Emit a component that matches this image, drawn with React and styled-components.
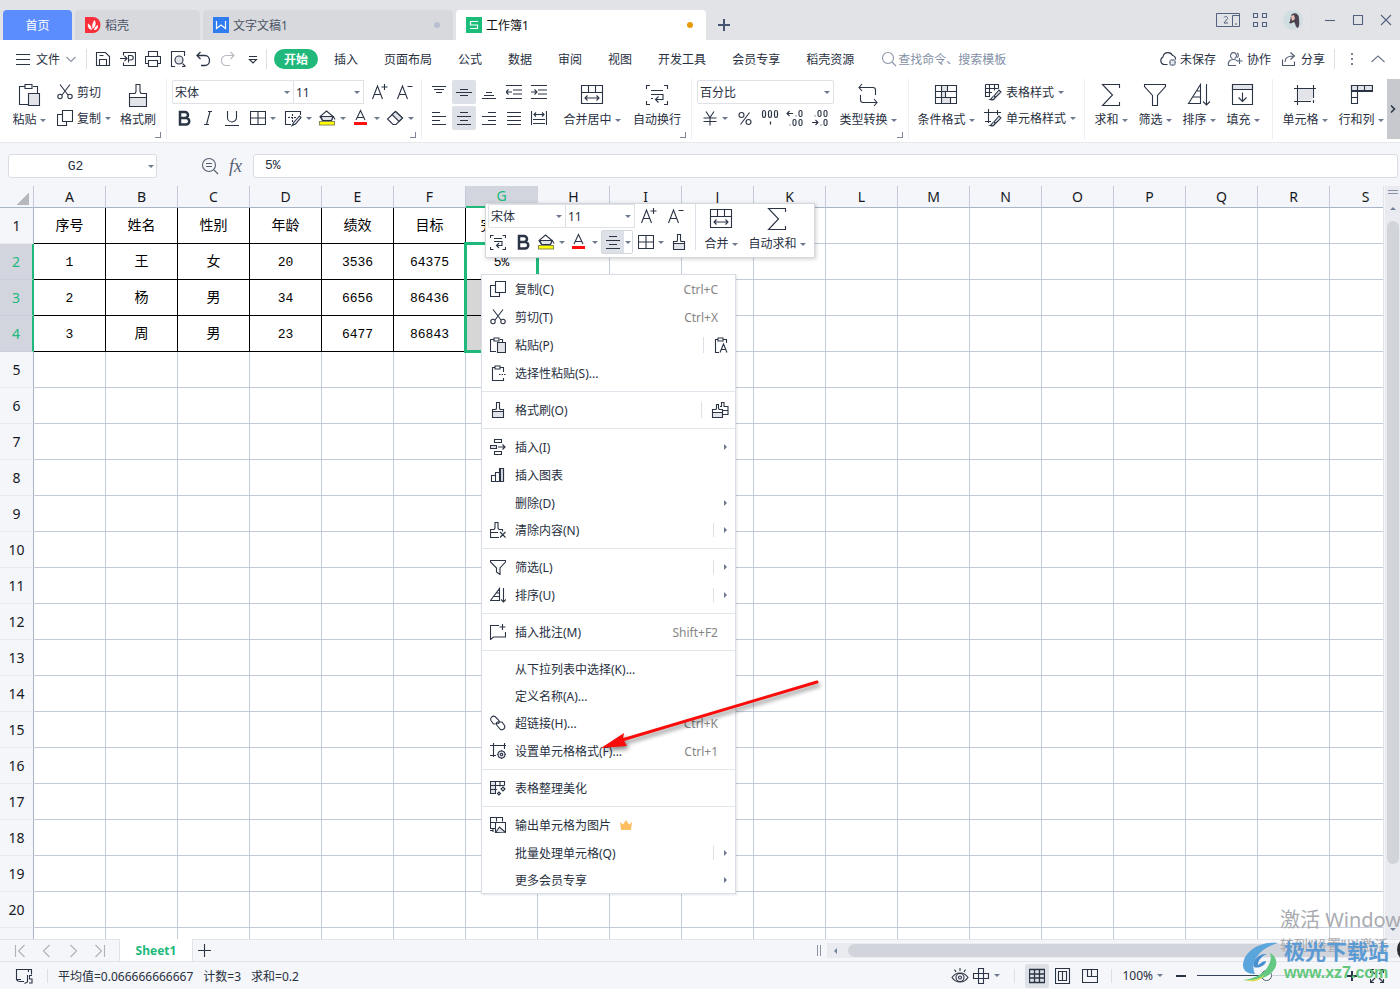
import React, { useState } from "react";
import styled, { createGlobalStyle } from "styled-components";

const GlobalStyle = createGlobalStyle`
  * { box-sizing: border-box; }
  html, body { margin: 0; height: 100%; overflow: hidden; }
  body, button, input, select {
    font-family: "Noto Sans", "Noto Sans CJK SC", sans-serif;
    font-size: 12px;
    color: #28303f;
  }
  button, input, select { border: 0; padding: 0; margin: 0; background: none; outline: none; }
  svg { display: block; flex: none; }
`;

const ink = "#2b3445";
const soft = "#e2e4e9";
const green = "#20b97b";

// [size, drawing]
const icons = {
  burger: [16, <path d="M1 3.500h14M1 8.500h14M1 13.500h14" />],
  down: [12, <path d="M1.500 4l4.500 4.500L10.500 4" stroke="#8a93a3" />],
  up: [16, <path d="M1.500 11L8 5l6.500 6" stroke="#6c7686" />],
  save: [16, <path d="M1.500 1.500h9l4 4v9h-13zM4.500 14.500v-6h7v6M4.500 4.500h4" />],
  output: [16, <path d="M3.500 4.500v-3h12v13h-12v-3M0 7.500h6.500M4.500 5l2.500 2.500-2.500 2.500M8.500 11.500v-7h2.500a2 2 0 0 1 0 4.500h-2.500" />],
  print: [16, <path d="M3.500 5V.5h9V5M3.500 12.500h-3V5.500h15v7h-3M3.500 9.500h9v6h-9z" />],
  preview: [16, <><path d="M5 15.500H1.500V.5h13V5M12.500 12.500l3 3M12 15.500h3" /><circle cx="9" cy="9" r="4" fill={soft} /></>],
  undo: [16, <path d="M5.500 1L2 4.500 5.500 8M2 4.500h8a4.500 5 0 0 1 0 10H6" strokeWidth="1.300" />],
  redo: [16, <path d="M10.500 1L14 4.500 10.500 8M14 4.500H6a4.500 5 0 0 0 0 10h4" stroke="#b5bac3" />],
  more: [12, <path d="M2 3.500h8M2.500 6.500L6 10l3.500-3.500z" />],
  search: [16, <><circle cx="7" cy="7" r="5.500" stroke="#8a94a8" /><path d="M11 11l4 4" stroke="#8a94a8" /></>],
  cloud: [18, <><path d="M8.500 14.500H5a4 4 0 0 1-1-7.500 5 5 0 0 1 9.500-1.500 3.500 3.500 0 0 1 3 4" /><circle cx="13.500" cy="12.500" r="3.500" fill="#8b94a5" stroke="none" /><path d="M12 11l3 3M15 11l-3 3" stroke="#fff" /></>],
  people: [16, <path d="M5.500 7.500a3 3 0 1 1 2 0M9 14.500H1.500c-1-4 1.500-6 5-6 2 0 3 .5 4 1.500M12.500 7v6M9.500 10h6M10 2a2.500 2.500 0 0 1 0 4.500" stroke="#56637a" />],
  share: [16, <path d="M1.500 8.500v6h12v-4M4 11c0-4 3-6 8-6M9.500 1.500L13.500 5l-4 3.500" stroke="#4c576b" />],
  dots: [16, <path d="M7 2h2v2H7zM7 7h2v2H7zM7 12h2v2H7z" fill="#7b8595" stroke="none" />],
  cut: [16, <><path d="M3 .5l8 10.500M13 .5L5 11" /><circle cx="3" cy="12.500" r="2.200" /><circle cx="13" cy="12.500" r="2.200" /></>],
  copy: [16, <path d="M5.500.5h10v11h-10zM5 4.500H.5v11h9V12" />],
  paste: [24, <><path d="M8 3.500H2.500v18H11M16 3.500h4.500V10" /><path d="M8 1.500h7v4H8z" /><path d="M11.500 10.500h11v12h-11z" fill={soft} /></>],
  pasteS: [16, <><path d="M4 2.500H.5v12H6M10 2.500h2.500V5M4 1h5v3H4z" /><path d="M7.500 5.500h8v10h-8z" fill={soft} /></>],
  special: [16, <path d="M5 2.500H2.500v13h11V13M10 2.500h3.500V7M5 1h5v3H5zM9 9.500h1.500M11.500 9.500h1.500M14 9.500h1.500" />],
  pasteA: [16, <path d="M5 2.500H2.500v13H6M10 2.500h3.500V6M5 1h5v3H5zM7 15.500L10.500 7l3.500 8.500M8.500 12.500h4" />],
  brush: [24, <><path d="M3.500 14.500h17v9h-17z" fill={soft} /><path d="M3.500 14.500v-4H9l1-2v-7h4v7l1 2h5.500v4" /></>],
  brushS: [16, <><path d="M2.500 9.500h11v6h-11z" fill={soft} /><path d="M2.500 9.500v-2H6l.5-1.500V.5h3V6l.5 1.500h3.500v2" /></>],
  brushes: [18, <><path d="M1.500 11.500h10v5h-10z" fill={soft} /><path d="M1.500 11.500v-3H5l.5-1.500V3.500h2V7l.5 1.500h3.500v3M9 5.500h1.500V1.500h2.500v4h4v8h-5M12 9.500h5" /></>],
  bigger: [18, <path d="M2.500 16L7.500 3l5 13M4.500 11.500h6M14.500 1v6M11.500 4h6" />],
  smaller: [18, <path d="M2.500 16L7.500 3l5 13M4.500 11.500h6M12.500 3.500h5" />],
  bold: [16, <path d="M4 2h5a3 3 0 0 1 0 6H4zM4 8h6a3 3 0 0 1 0 6.500H4z" strokeWidth="2.500" />],
  italic: [16, <path d="M8 1.500h4M10 1.500L6.500 14.500M4 14.500h5" />],
  underline: [16, <path d="M3.500 1v6.500a4.500 4.500 0 0 0 9 0V1M1 15.500h14" />],
  borders: [16, <path d="M.5 1.500h15v13H.5zM8 1.500v13M.5 8h15" />],
  pen: [18, <><path d="M7 15.500H1.500v-13h15V6" /><path d="M4 8.500h8M8.500 5v8" strokeDasharray="2 1" /><path d="M15.500 7l-5.500 6-2 3.500 3.500-1.500L17 8.500z" fill={soft} /></>],
  fill: [18, <><path d="M8.500 2L15 7.500l-1.500 4h-9L2 7.500z" fill="#fff" /><path d="M3 7.500h12l-1.500 4h-9z" fill={soft} /><path d="M15 7l2 3.500" /><path d="M1.500 12.500h15v3.500h-15z" fill="#ffff00" stroke="#8b8b55" /></>],
  color: [18, <><path d="M4 11L8.500 1.500 13 11M5.500 8.500h6" /><path d="M2 13h13v3H2z" fill="#ff1010" stroke="none" /></>],
  eraser: [18, <><path d="M9.500 2.500l7 6.500-6.500 6.500H7L1.500 10z" fill="#fff" /><path d="M9.500 2.500l7 6.500-3.500 3.500-7-7z" fill={soft} /></>],
  top: [16, <path d="M1 2.500h14M3 5.500h10M5 8.500h6" />],
  middle: [16, <path d="M4 5.500h8M0 8.500h16M4 11.500h8" />],
  bottom: [16, <path d="M5 8.500h6M3 11.500h10M1 14.500h14" />],
  outdent: [16, <path d="M0 1.500h16M7 6h9M7 10h9M0 14.500h16M0 8h6M2.500 5.500L0 8l2.500 2.500" />],
  indent: [16, <path d="M0 1.500h16M7 6h9M7 10h9M0 14.500h16M0 8h6M3.500 5.500L6 8l-2.500 2.500" />],
  left: [16, <path d="M1 2.500h8M1 6.500h14M1 10.500h8M1 14.500h14" />],
  center: [16, <path d="M4 2.500h8M1 6.500h14M4 10.500h8M1 14.500h14" />],
  right: [16, <path d="M7 2.500h8M1 6.500h14M7 10.500h8M1 14.500h14" />],
  justify: [16, <path d="M1 2.500h14M1 6.500h14M1 10.500h14M1 14.500h14" />],
  spread: [16, <path d="M.5 1v14M15.500 1v14M3 4.500h10M5 2.500l-2 2 2 2M11 2.500l2 2-2 2M2 9.500h12M2 13.500h12" />],
  merge: [24, <><path d="M1.500 2.500h21v18h-21zM1.500 9.500h21M8.500 2.500v7M15.500 2.500v7" /><path d="M5 15h14M7.500 12.500L5 15l2.500 2.500M16.500 12.500L19 15l-2.500 2.500" /></>],
  wrap: [24, <path d="M5 2.500H1.500V6M19 2.500h3.500V6M5 21.500H1.500V18M19 21.500h3.500V18M6 7.500h12M6 11.500h12v5h-7M6 15.500h2M13.500 13.500l-3 3 3 3" />],
  wrapS: [16, <path d="M3.500 1.500h-3V4M12.500 1.500h3V4M3.500 15.500h-3V13M12.500 15.500h3V13M4 4.500h8M4 7.500h8v4H7M9 9l-2.500 2.500L9 14" />],
  yen: [16, <path d="M4 1.500L8 7.500l4-6M1.500 8h13M1.500 11.500h13M8 7.500v8" />],
  percent: [16, <><circle cx="4.500" cy="5" r="2.500" /><circle cx="11.500" cy="12" r="2.500" /><path d="M12.500 2.500l-9 12" /></>],
  comma: [18, <path d="M1.500 3.500a1.500 2 0 0 1 3 0v3a1.500 2 0 0 1-3 0zM7.500 3.500a1.500 2 0 0 1 3 0v3a1.500 2 0 0 1-3 0zM13.500 3.500a1.500 2 0 0 1 3 0v3a1.500 2 0 0 1-3 0zM9.500 12.500v3" strokeWidth="1.200" />],
  decUp: [18, <path d="M1 4.500h6M3.500 2L1 4.500 3.500 7M9.500 7h1M13 3a1.500 1.500 0 0 1 3 0v3a1.500 1.500 0 0 1-3 0zM3.500 16h1M7 12a1.500 1.500 0 0 1 3 0v3a1.500 1.500 0 0 1-3 0zM13 12a1.500 1.500 0 0 1 3 0v3a1.500 1.500 0 0 1-3 0z" />],
  decDown: [18, <path d="M3.500 7h1M7 3a1.500 1.500 0 0 1 3 0v3a1.500 1.500 0 0 1-3 0zM13 3a1.500 1.500 0 0 1 3 0v3a1.500 1.500 0 0 1-3 0zM1 13.500h6M4.500 11L7 13.500 4.500 16M9.500 16h1M13 12a1.500 1.500 0 0 1 3 0v3a1.500 1.500 0 0 1-3 0z" />],
  convert: [24, <path d="M6 1L3 4.500 6 8M3 4.500h14a2.500 2.500 0 0 1 2.500 2.500v5M18 23l3-3.500-3-3.500M21 19.500H7A2.500 2.500 0 0 1 4.500 17v-5" />],
  cond: [24, <><path d="M7 3h7v6H7zM7 9h4v6H7zM7 15h10v6H7z" fill={soft} stroke="none" /><path d="M1.500 2.500h21v18h-21zM1.500 8.500h21M1.500 14.500h21M7.500 2.500v6M13.500 2.500v6M7.500 8.500v12M11.500 8.500v6M16.500 14.500v6" /></>],
  tstyle: [18, <><path d="M1.500 1.500h13v4M1.500 1.500v12H6M1.500 5.500h13M1.500 9.500H8M5.500 1.500v12M10.500 1.500v6" /><path d="M15 7l-5 6 1.500 1.500L17 9zM9.500 13.500c-2 0-1 2.500-3.500 3 2.500 1 4.500 0 5-2" fill={soft} /></>],
  cstyle: [18, <><path d="M4.500 0v14M0 3.500h17M13.500 1v5M1 12.500h6" /><path d="M15 7l-5 6 1.500 1.500L17 9zM9.500 13.500c-2 0-1 2.500-3.500 3 2.500 1 4.500 0 5-2" fill={soft} /></>],
  sum: [24, <path d="M20.500 5V1.500h-17L13.500 12l-10 10.500h17V19" />],
  filter: [24, <path d="M1.500 1.500h21v2l-8 9v10h-5v-10l-8-9z" />],
  filterS: [16, <path d="M.5 1.500h15v1.500L10 9v6.500L6.500 13V9L.5 3z" />],
  sort: [24, <path d="M1.500 20.500L13.500 1.500v19zM6 14h7M9.500 8h4M19.500 1v21M16 18.500l3.500 3.500 3.500-3.500" />],
  sortS: [16, <path d="M.5 13.500L9.500 1.500v12zM3.500 9.500h6M6 6h3.500M13.500 1v14M11 12.500l2.500 2.500 2.500-2.500" />],
  fillDown: [24, <><path d="M1.500 1.500h20v5h-20z" fill={soft} /><path d="M1.500 1.500h20v20h-20zM11.500 9.500v9M7.500 14.500l4 4 4-4" /></>],
  cell: [24, <><path d="M5.500 5.500h14v12h-14z" fill={soft} stroke="none" /><path d="M1 5.500h22M4.500 2v20M1 18.500h17M20.500 2v13M20.500 17v3" /></>],
  rowcol: [24, <><path d="M2.500 2.500h21v5h-21z" fill={soft} /><path d="M2.500 2.500h21v6h-15v12h-6zM8.500 2.500v6M15.500 2.500v6M2.500 8.500h6M2.500 14.500h6" /></>],
  zoomOut: [18, <><circle cx="8" cy="8" r="6.500" stroke="#566072" /><path d="M5 6.500h6M5 9.500h6M13 13l4 4" stroke="#566072" /></>],
  insert: [16, <><path d="M4.500.5h7v3h-7zM4.500 12.500h7v3h-7z" /><path d="M.5 6.500h6v3h-6z" fill={soft} /><path d="M8 8h7M12.500 5.500L15 8l-2.500 2.500" /></>],
  chart: [16, <><path d="M10.500 1.500h3v13h-3z" fill={soft} /><path d="M1.500 8.500h4v6h-4zM5.500 5.500h4v9h-4zM9.500 1.500h4v13h-4z" /></>],
  clear: [16, <path d="M9 15.500H.5v-8H4L5 6V.5h3V6l1 1.500h3.500v2M.5 10.500H8M10 10l5.500 5.500M15.500 10L10 15.500" />],
  note: [16, <path d="M9 1.500H.5v14l3-2.500h12V8M12.500 0v6M9.500 3h6" />],
  link: [16, <path d="M8.500 8.500L3.500 9 1 5.500a3 3 0 0 1 4-4l4 4a3 3 0 0 1-.5 3M7 7l5 0 2.500 3.500a3 3 0 0 1-4 4l-3.500-4a3 3 0 0 1 0-3.500" />],
  format: [16, <><path d="M3.500 0v14M0 2.500h16M14.500 0v6M0 12.500h6" /><circle cx="11.500" cy="11.500" r="3.500" fill={soft} /><circle cx="11.500" cy="11.500" r="1.200" /><path d="M11.500 7v1M11.500 15v1M7 11.500h1M15 11.500h1" /></>],
  beauty: [16, <><path d="M1 1.500h5v12H1z" fill={soft} stroke="none" /><path d="M6 13.500H.5v-12h14v4M.5 5.500h14M.5 9.500H7M5.500 1.500v12M10 1.500v5" /><path d="M13 7l2 2-2 2-2-2zM9 12l1.500 1.500L9 15l-1.500-1.500z" /></>],
  picture: [16, <><path d="M5 11.500H.5V.5h12v4M.5 5.500H5M6.500.5v4" /><path d="M5.500 5.500h10v10h-10z" fill="#fff" /><path d="M6 15l3.500-5 6 5.500" fill={soft} /><path d="M0 13.500h3M3 12v3" /></>],
  crown: [14, <path d="M1 4l3 2.500L7 2l3 4.500L13 4l-1 8H2z" fill="#ffbf60" stroke="none" />],
  first: [14, <path d="M1.500 1v12M10.500 1L4.500 7l6 6" stroke="#adb2bc" />],
  prev: [14, <path d="M9.500 1L3.500 7l6 6" stroke="#adb2bc" />],
  next: [14, <path d="M4.500 1l6 6-6 6" stroke="#adb2bc" />],
  last: [14, <path d="M3.500 1l6 6-6 6M12.500 1v12" stroke="#adb2bc" />],
  plus: [14, <path d="M6.500 0v13M0 6.500h13" />],
  plusTab: [14, <path d="M7 1v12M1 7h12" stroke="#46546f" strokeWidth="2" />],
  macro: [18, <path d="M6 12.500H1.500v-10h15v5M1.500 12.500l2 2M4 14.500h5M13.500 3v2M12.500 8v7l-3 1.500M17 8.500h-2.500v3.500H17v4h-3" />],
  eye: [18, <><path d="M1 10.500c4-6 12-6 16 0-4 6-12 6-16 0zM9 1v3M3.500 2.500L5 5M14.500 2.500L13 5" /><circle cx="9" cy="10.500" r="4" /><circle cx="9" cy="10.500" r="1.500" /></>],
  cross: [18, <path d="M6.500 1.500h5v15h-5zM1.500 6.500h15v5h-15z" />],
  normal: [16, <path d="M.5 1.500h15v13H.5zM.5 6h15M.5 10h15M5.500 1.500v13M10.500 1.500v13" strokeWidth="1.300" />],
  page: [16, <path d="M.5.5h14v15H.5zM3.500 3.500h8v9h-8zM7.500 3.500v9" />],
  brk: [16, <path d="M.5 1.500h15v13H.5zM5.500 1.500v7h10M9.500 1.500v7" />],
  full: [16, <path d="M5 1.500H1.500V5M11 1.500h3.500V5M5 14.500H1.500V11M11 14.500h3.500V11M2 2l4 4M14 2l-4 4M2 14l4-4M14 14l-4-4" />],
  grid4: [16, <path d="M1.500 1.500h4v4h-4zM10.500 1.500h4v4h-4zM1.500 10.500h4v4h-4zM10.500 10.500h4v4h-4z" stroke="#53627f" />],
  min: [14, <path d="M2 7.500h10" stroke="#53627f" />],
  max: [14, <path d="M2.500 2.500h9v9h-9z" stroke="#53627f" />],
  close: [14, <path d="M2 2l10 10M12 2L2 12" stroke="#53627f" />],
  chevR: [12, <path d="M4 2.500L7.500 6 4 9.500" strokeWidth="1.500" />],
};

const Icon = ({ name }) => {
  const [size, body] = icons[name];
  return (
    <svg width={size} height={size} viewBox={`0 0 ${size} ${size}`} fill="none" stroke={ink} strokeWidth="1.1" aria-hidden="true">
      {body}
    </svg>
  );
};

const Caret = styled.i`
  flex: none;
  width: 0;
  border: 3px solid transparent;
  border-bottom: 0;
  border-top-color: #6d7a90;
`;

const Page = styled.div`
  position: relative;
  display: flex;
  flex-direction: column;
  height: 100vh;
  overflow: hidden;
  background: #f5f6f9;
`;

const Spacer = styled.div`
  flex: 1;
`;

const Gap = styled.span`
  flex: none;
  width: ${(p) => p.$w}px;
`;

const Rule = styled.span`
  flex: none;
  width: 1px;
  height: ${(p) => p.$h || 20}px;
  margin: 0 ${(p) => p.$r || 0}px 0 ${(p) => p.$l || 0}px;
  background: ${(p) => (p.$dark ? "#8b94a5" : "#dcdfe5")};
`;

/* title bar */
const TabBar = styled.header`
  display: flex;
  align-items: flex-end;
  flex: none;
  gap: 3px;
  height: 40px;
  padding-left: 3px;
  background: #e2e3e7;
`;

const Tab = styled.button`
  display: flex;
  align-items: center;
  gap: 4px;
  flex: none;
  width: ${(p) => p.$w}px;
  height: 30px;
  padding: 0 10px;
  border-radius: 4px 4px 0 0;
  justify-content: ${(p) => (p.$home ? "center" : "flex-start")};
  background: ${(p) => (p.$home ? "#5c8dff" : p.$active ? "#fff" : "#d8d9dd")};
  color: ${(p) => (p.$home ? "#fff" : p.$active ? "#111" : "#4a5366")};
`;

const Dot = styled.span`
  width: 6px;
  height: 6px;
  margin-right: 3px;
  border-radius: 50%;
  background: ${(p) => p.$color};
`;

const PlainButton = styled.button`
  display: flex;
  align-items: center;
  justify-content: center;
  gap: ${(p) => p.$gap || 4}px;
  flex: none;
  width: ${(p) => (p.$w ? p.$w + "px" : "auto")};
  height: ${(p) => p.$h || 24}px;
`;

const WindowTools = styled.div`
  display: flex;
  align-items: center;
  height: 40px;
`;

/* menu bar */
const MenuBar = styled.nav`
  display: flex;
  align-items: center;
  flex: none;
  height: 38px;
  padding: 0 14px 0 15px;
  background: #fff;
`;

const QuickTools = styled.div`
  display: flex;
  gap: 1px;
  padding: 0 0 0 4px;
`;

const MenuLinks = styled.div`
  display: flex;
  align-items: center;
  gap: 26px;
  margin-left: 16px;
`;

const MenuTab = styled.button`
  height: 20px;
  padding-top: 1px;
  line-height: 19px;
  white-space: nowrap;
`;

const StartTab = styled(MenuTab)`
  width: 44px;
  margin-left: 7px;
  border-radius: 10px;
  background: ${green};
  color: #fff;
  font-weight: 700;
`;

const Search = styled.label`
  display: flex;
  align-items: center;
  gap: 1px;
  margin-left: 27px;
  input { width: 130px; height: 20px; }
  input::placeholder { color: #8490a6; opacity: 1; }
`;

/* ribbon */
const Ribbon = styled.section`
  display: flex;
  flex: none;
  height: 65px;
  padding: 1px 0 3px;
  background: #fff;
  border-bottom: 1px solid #e6e8ec;
  overflow: hidden;
`;

const Group = styled.div`
  position: relative;
  display: flex;
  flex: none;
  width: ${(p) => p.$w}px;
  padding: 1px 0 0 ${(p) => p.$pad || 5}px;
  border-left: 1px solid ${(p) => (p.$first ? "#fff" : "#eceef2")};
  &::after {
    content: "";
    display: ${(p) => (p.$corner ? "block" : "none")};
    position: absolute;
    right: 5px;
    bottom: 1px;
    width: 5px;
    height: 5px;
    border: solid #7b8595;
    border-width: 0 1px 1px 0;
  }
`;

const BigTool = styled.button`
  display: flex;
  flex-direction: column;
  align-items: center;
  flex: none;
  gap: 4px;
  width: ${(p) => p.$w}px;
  height: 48px;
  padding-top: 3px;
  margin-left: ${(p) => p.$ml || 0}px;
`;

const Caption = styled.span`
  display: flex;
  align-items: center;
  gap: 3px;
  line-height: 18px;
  white-space: nowrap;
`;

const Stack = styled.div`
  display: flex;
  flex-direction: column;
  gap: 2px;
  margin-left: ${(p) => p.$ml || 0}px;
`;

const Row = styled.div`
  display: flex;
  align-items: center;
  gap: ${(p) => p.$gap || 0}px;
  height: 24px;
`;

const Tool = styled.button`
  display: flex;
  align-items: center;
  justify-content: center;
  flex: none;
  width: 24px;
  height: 24px;
  border-radius: 2px;
  background: ${(p) => (p.$on ? "#dde1e7" : "none")};
`;

const DropTool = styled(Tool)`
  width: ${(p) => p.$w || 34}px;
  justify-content: flex-start;
  gap: 4px;
`;

const TextTool = styled(Tool)`
  width: auto;
  justify-content: flex-start;
  gap: 4px;
  white-space: nowrap;
`;

const Picker = styled.span`
  position: relative;
  width: ${(p) => p.$w}px;
  height: 24px;
  border: 1px solid #dfe1e6;
  border-radius: ${(p) => (p.$joined ? 0 : 2)}px;
  margin-left: ${(p) => (p.$joined ? -1 : 0)}px;
  select {
    width: 100%;
    height: 22px;
    padding: 0 14px 0 2px;
    appearance: none;
  }
  ${Caret} {
    position: absolute;
    right: 3px;
    top: 10px;
    pointer-events: none;
  }
`;

const ScrollRibbon = styled.button`
  flex: none;
  width: 13px;
  margin-left: auto;
  background: #c8c9cf;
`;

/* formula bar */
const FormulaBar = styled.div`
  display: flex;
  align-items: center;
  flex: none;
  height: 43px;
  padding: 3px 2px 0 8px;
`;

const Field = styled.input`
  height: 24px;
  border: 1px solid #d9dce2;
  border-radius: 3px;
  background: #fff;
  font-family: "Liberation Mono", monospace;
  font-size: 13px;
`;

const NameBox = styled.span`
  position: relative;
  width: 149px;
  ${Field} { width: 100%; padding-right: 14px; text-align: center; }
  ${Caret} { position: absolute; right: 3px; top: 11px; }
`;

const FormulaField = styled(Field)`
  flex: 1;
  min-width: 0;
  padding: 0 11px 2px;
`;

const Fx = styled.span`
  width: 16px;
  margin: 0 8px 0 10px;
  font: italic 18px/20px "Liberation Serif", serif;
  color: #566072;
`;

/* sheet */
const SheetArea = styled.main`
  display: flex;
  flex: 1;
  min-height: 0;
`;

const SheetClip = styled.div`
  flex: 1;
  min-width: 0;
  overflow: hidden;
  border-right: 1px solid #e0e3e9;
`;

const Table = styled.table`
  width: 1402px;
  table-layout: fixed;
  border-collapse: separate;
  border-spacing: 0;
  th, td { padding: 0; text-align: center; }
  th { font-size: 14px; font-weight: 400; color: #16191f; line-height: 20px; }
`;

const ColHead = styled.th`
  width: 72px;
  height: 22px;
  border-right: 1px solid ${(p) => (p.$on ? "#d2d5dd" : "#c3cadb")};
  border-bottom: ${(p) => (p.$on ? `2px solid ${green}` : "1px solid #a9b4c9")};
  background: ${(p) => (p.$on ? "#d2d5dd" : "#f5f6f9")};
  && { color: ${(p) => (p.$on ? green : "#16191f")}; }
`;

const Corner = styled(ColHead)`
  width: 34px;
  &::after {
    content: "";
    display: block;
    width: 12px;
    height: 12px;
    margin: 4px 0 0 17px;
    background: linear-gradient(135deg, transparent 50%, #b6b8bc 50%);
  }
`;

const RowHead = styled.th`
  height: 36px;
  border-right: ${(p) => (p.$on ? `2px solid ${green}` : "1px solid #a9b4c9")};
  border-bottom: 1px solid ${(p) => (p.$on ? "#cacdd7" : "#e9ebf0")};
  background: ${(p) => (p.$on ? "#d2d5dd" : "#f5f6f9")};
  && { color: ${(p) => (p.$on ? green : "#16191f")}; }
`;

const Cell = styled.td`
  position: relative;
  border-right: 1px solid ${(p) => (p.$data ? "#000" : "#c3cadb")};
  border-bottom: 1px solid ${(p) => (p.$data ? "#000" : "#c3cadb")};
  background: ${(p) => (p.$grey ? "#d6d6d6" : "#fff")};
  font-family: "Liberation Mono", "Noto Sans CJK SC", monospace;
  font-size: ${(p) => (p.$num ? 13 : 14)}px;
  line-height: 20px;
  color: #000;
  && { padding-top: ${(p) => (p.$num ? 3 : 0)}px; }
`;

const Selection = styled.span`
  position: absolute;
  z-index: 1;
  inset: -2px -2px auto -2px;
  height: 111px;
  border: 3px solid ${green};
`;

const VScroll = styled.div`
  display: flex;
  flex-direction: column;
  align-items: center;
  width: 16px;
  padding: 4px 0 8px;
  background: #e9ebf0;
  border-left: 1px solid #f5f6f9;
`;

const SplitMark = styled.span`
  width: 10px;
  height: 4px;
  margin-bottom: 13px;
  border: solid #8792a8;
  border-width: 1px 0;
`;

const ScrollArrow = styled.i`
  width: 0;
  border: 3px solid transparent;
  ${(p) => p.$dir === "up" && "border-top: 0; border-bottom-color: #76839c;"}
  ${(p) => p.$dir === "down" && "border-bottom: 0; border-top-color: #76839c;"}
  ${(p) => p.$dir === "left" && "border-left: 0; border-right-color: #76839c;"}
`;

const VThumb = styled.span`
  flex: 1;
  width: 12px;
  margin: 11px 0 64px;
  border-radius: 6px;
  background: #d2d4db;
`;

/* sheet tabs and status */
const SheetTabs = styled.div`
  display: flex;
  align-items: center;
  flex: none;
  height: 23px;
  padding-left: 8px;
  border-top: 1px solid #e1e4ea;
  border-bottom: 1px solid #e1e4ea;
`;

const SheetTab = styled.button`
  width: 74px;
  height: 22px;
  margin: -1px 5px 0 7px;
  background: #fff;
  border-right: 1px solid #dfe2e8;
  border-left: 1px solid #dfe2e8;
  color: ${green};
  font-weight: 700;
`;

const HScroll = styled.div`
  display: flex;
  align-items: center;
  width: 573px;
  height: 15px;
  margin-left: 6px;
  padding-left: 7px;
  background: #e9ebf0;
`;

const HThumb = styled.span`
  flex: 1;
  height: 13px;
  margin: 0 34px 0 11px;
  border-radius: 7px;
  background: #d2d4db;
`;

const Status = styled.footer`
  display: flex;
  align-items: center;
  flex: none;
  height: 27px;
  padding: 0 15px;
`;

const Stats = styled.span`
  display: flex;
  gap: 10px;
  margin-left: 10px;
  white-space: nowrap;
`;

const ZoomRange = styled.input.attrs({ type: "range" })`
  width: 144px;
  height: 14px;
  margin: 0 5px 0 10px;
  appearance: none;
  &::-webkit-slider-runnable-track {
    height: 1px;
    background: linear-gradient(90deg, #35425a 48%, #ccd1da 48%);
  }
  &::-webkit-slider-thumb {
    appearance: none;
    width: 11px;
    height: 11px;
    margin-top: -5px;
    border: 1px solid #4d5666;
    border-radius: 50%;
    background: #fff;
  }
`;

/* floating parts */
const MiniBar = styled.div`
  position: absolute;
  z-index: 3;
  top: 203px;
  left: 485px;
  display: flex;
  padding: 0 5px 3px 2px;
  border: 1px solid #d4d7dd;
  background: #fff;
  box-shadow: 1px 1px 4px rgba(0, 0, 0, 0.2);
`;

const MiniCenter = styled(DropTool)`
  padding-left: 3px;
  border: 1px solid #d3d8df;
  background: linear-gradient(90deg, #dde1e7 22px, #fff 22px);
`;

const Menu = styled.ul`
  position: absolute;
  z-index: 3;
  top: 274px;
  left: 481px;
  width: 255px;
  margin: 0;
  padding: 0;
  list-style: none;
  border: 1px solid #d9dde5;
  background: #fff;
  box-shadow: 1px 1px 2px rgba(60, 80, 120, 0.15);
`;

const MenuItem = styled.li`
  button {
    display: flex;
    align-items: center;
    width: 100%;
    height: ${(p) => (p.$short ? 27 : 28)}px;
    padding: 0 6px 0 8px;
    text-align: left;
    white-space: nowrap;
  }
`;

const IconSlot = styled.span`
  width: 25px;
`;

const Shortcut = styled.span`
  margin-right: 11px;
  color: #858585;
`;

const SubArrow = styled.i`
  width: 0;
  margin: 0 2px 0 10px;
  border: 3px solid transparent;
  border-right: 0;
  border-left-color: #6b7890;
`;

const Divider = styled.li`
  height: 1px;
  margin: 4px 0;
  background: #e2e5eb;
`;

const Pointer = styled.svg`
  position: absolute;
  z-index: 4;
  top: 670px;
  left: 590px;
  pointer-events: none;
  filter: drop-shadow(2px 3px 2px rgba(0, 0, 0, 0.45));
`;

const Activate = styled.div`
  position: absolute;
  z-index: 2;
  left: 1280px;
  bottom: 34px;
  font-size: 14px;
  line-height: 20px;
  color: #a9abaf;
  white-space: nowrap;
  pointer-events: none;
  strong { display: block; font-size: 20px; font-weight: 400; line-height: 30px; }
`;

const Brand = styled.div`
  position: absolute;
  z-index: 4;
  left: 1240px;
  bottom: 6px;
  display: flex;
  color: #5c9ad3;
  font-size: 21px;
  font-weight: 700;
  line-height: 24px;
  white-space: nowrap;
  pointer-events: none;
  small { display: block; color: #62c77b; font-size: 16px; line-height: 20px; font-family: "Liberation Sans", sans-serif; }
`;

const Bubble = styled.span`
  position: absolute;
  z-index: 4;
  right: -22px;
  bottom: 27px;
  width: 25px;
  height: 25px;
  border-radius: 50%;
  background: #2a2c31;
`;

const Pick = ({ w, joined, value, label }) => (
  <Picker $w={w} $joined={joined}>
    <select aria-label={label} defaultValue={value}>
      <option>{value}</option>
    </select>
    <Caret />
  </Picker>
);

const Drop = ({ name, label, w }) => (
  <DropTool $w={w} aria-label={label}>
    <Icon name={name} />
    <Caret />
  </DropTool>
);

const Big = ({ name, text, w, ml, caret = true }) => (
  <BigTool $w={w} $ml={ml}>
    <Icon name={name} />
    <Caption>
      {text}
      {caret && <Caret />}
    </Caption>
  </BigTool>
);

const Small = ({ name, text, caret }) => (
  <TextTool>
    <Icon name={name} />
    {text}
    {caret && <Caret />}
  </TextTool>
);

const quick = ["save", "output", "print", "preview", "undo", "redo", "more"];
const menuTabs = ["插入", "页面布局", "公式", "数据", "审阅", "视图", "开发工具", "会员专享", "稻壳资源"];
const columns = "ABCDEFGHIJKLMNOPQRS".split("");
const cells = [
  ["序号", "姓名", "性别", "年龄", "绩效", "目标", "完成率"],
  ["1", "王", "女", "20", "3536", "64375", "5%"],
  ["2", "杨", "男", "34", "6656", "86436", ""],
  ["3", "周", "男", "23", "6477", "86843", ""],
];

const menuItems = [
  { icon: "copy", text: "复制(C)", key: "Ctrl+C" },
  { icon: "cut", text: "剪切(T)", key: "Ctrl+X" },
  { icon: "pasteS", text: "粘贴(P)", extra: "pasteA" },
  { icon: "special", text: "选择性粘贴(S)..." },
  null,
  { icon: "brushS", text: "格式刷(O)", extra: "brushes" },
  null,
  { icon: "insert", text: "插入(I)", sub: true },
  { icon: "chart", text: "插入图表" },
  { text: "删除(D)", sub: true },
  { icon: "clear", text: "清除内容(N)", sub: true, rule: true },
  null,
  { icon: "filterS", text: "筛选(L)", sub: true, rule: true },
  { icon: "sortS", text: "排序(U)", sub: true, rule: true },
  null,
  { icon: "note", text: "插入批注(M)", key: "Shift+F2" },
  null,
  { text: "从下拉列表中选择(K)..." },
  { text: "定义名称(A)..." },
  { icon: "link", text: "超链接(H)...", key: "Ctrl+K" },
  { icon: "format", text: "设置单元格格式(F)...", key: "Ctrl+1" },
  null,
  { icon: "beauty", text: "表格整理美化" },
  null,
  { icon: "picture", text: "输出单元格为图片", crown: true },
  { text: "批量处理单元格(Q)", sub: true, rule: true },
  { text: "更多会员专享", sub: true },
];

const Titles = () => (
  <TabBar>
    <Tab $w={69} $home>首页</Tab>
    <Tab $w={125}>
      <svg width="16" height="16" viewBox="0 0 16 16">
        <path d="M0 0h8a7.500 8 0 0 1 0 16H0z" fill="#fb2f3c" />
        <path d="M7 13C3 12 2.500 9 3 6.500c2 1 3.500 3 4 6.500zM7.500 12c-1-4 .5-7 2-9 2 3 1.500 6-2 9zM9 13c.5-3 2-4 4-5 0 3-1 5-4 5z" fill="#fff" />
      </svg>
      稻壳
    </Tab>
    <Tab $w={250}>
      <svg width="16" height="16" viewBox="0 0 16 16">
        <path d="M0 0h16v16H0z" fill="#2f7df0" />
        <path d="M3.500 4v7.500L8 8l4.500 3.500V4" fill="none" stroke="#fff" strokeWidth="1.200" />
      </svg>
      文字文稿1
      <Spacer />
      <Dot $color="#b9c0d2" />
    </Tab>
    <Tab $w={250} $active>
      <svg width="16" height="16" viewBox="0 0 16 16">
        <path d="M0 0h16v16H0z" fill="#1bbd79" />
        <path d="M12 4.500H4.500V8h7v3.500H4" fill="none" stroke="#fff" strokeWidth="1.200" />
      </svg>
      工作簿1
      <Spacer />
      <Dot $color="#e69a0c" />
    </Tab>
    <PlainButton $w={30} $h={30} aria-label="新建"><Icon name="plusTab" /></PlainButton>
    <Spacer />
    <WindowTools>
      <PlainButton $w={26} aria-label="双屏">
        <svg width="24" height="14" viewBox="0 0 24 14" fill="none" stroke="#53627f">
          <path d="M16 13.500H.5V.5h23v3M16.500 2.500h7v11h-7zM19 11h2M8 4.500c1-2 4-1 3.500 1L8 10h4" />
        </svg>
      </PlainButton>
      <PlainButton $w={38} aria-label="应用"><Icon name="grid4" /></PlainButton>
      <PlainButton $w={28} aria-label="账号">
        <svg width="20" height="20" viewBox="0 0 20 20">
          <circle cx="10" cy="10" r="10" fill="#d0dde1" />
          <path d="M9 4c3-2 7 0 7 4 0 3 1 7-1 10-3-1-2-4-4-6-2 1-3 2-5 1 2-2 1-6 3-9z" fill="#4b4350" />
          <path d="M8 6l3-1 1 4-3 2z" fill="#e6c2b8" />
        </svg>
      </PlainButton>
      <Rule $l={4} $r={4} />
      <PlainButton $w={28} aria-label="最小化"><Icon name="min" /></PlainButton>
      <PlainButton $w={28} aria-label="最大化"><Icon name="max" /></PlainButton>
      <PlainButton $w={28} aria-label="关闭"><Icon name="close" /></PlainButton>
    </WindowTools>
  </TabBar>
);

const Menus = () => (
  <MenuBar>
    <PlainButton $gap={5}>
      <Icon name="burger" />
      文件
      <Icon name="down" />
    </PlainButton>
    <Rule $l={9} />
    <QuickTools>
      {quick.map((q) => (
        <PlainButton key={q} $w={24} aria-label={q}><Icon name={q} /></PlainButton>
      ))}
    </QuickTools>
    <Rule $l={1} />
    <StartTab>开始</StartTab>
    <MenuLinks>
      {menuTabs.map((t) => (
        <MenuTab key={t}>{t}</MenuTab>
      ))}
    </MenuLinks>
    <Search>
      <Icon name="search" />
      <input placeholder="查找命令、搜索模板" aria-label="搜索" />
    </Search>
    <Spacer />
    <PlainButton $gap={3}><Icon name="cloud" />未保存</PlainButton>
    <Gap $w={11} />
    <PlainButton $gap={4}><Icon name="people" />协作</PlainButton>
    <Gap $w={10} />
    <PlainButton $gap={4}><Icon name="share" />分享</PlainButton>
    <Rule $l={9} $r={9} />
    <PlainButton aria-label="更多"><Icon name="dots" /></PlainButton>
    <Gap $w={10} />
    <PlainButton aria-label="收起"><Icon name="up" /></PlainButton>
  </MenuBar>
);

const Tools = () => (
  <Ribbon>
    <Group $w={166} $pad={7} $first $corner>
      <Big name="paste" text="粘贴" w={42} />
      <Stack $ml={7}>
        <Small name="cut" text="剪切" />
        <Small name="copy" text="复制" caret />
      </Stack>
      <Big name="brush" text="格式刷" w={38} ml={8} caret={false} />
    </Group>
    <Group $w={255} $corner>
      <Stack>
        <Row>
          <Pick w={122} value="宋体" label="字体" />
          <Pick w={71} joined value="11" label="字号" />
          <Row $gap={1}>
            <PlainButton $w={30} aria-label="增大字号"><Icon name="bigger" /></PlainButton>
            <PlainButton $w={18} aria-label="减小字号"><Icon name="smaller" /></PlainButton>
          </Row>
        </Row>
        <Row>
          <Tool aria-label="加粗"><Icon name="bold" /></Tool>
          <Tool aria-label="倾斜"><Icon name="italic" /></Tool>
          <Tool aria-label="下划线"><Icon name="underline" /></Tool>
          <Gap $w={6} />
          <Drop name="borders" label="边框" />
          <Drop name="pen" label="绘制边框" />
          <Drop name="fill" label="填充颜色" />
          <Drop name="color" label="字体颜色" />
          <Drop name="eraser" label="清除" />
        </Row>
      </Stack>
    </Group>
    <Group $w={270} $corner>
      <Stack>
        <Row $gap={1}>
          <Tool aria-label="顶端对齐"><Icon name="top" /></Tool>
          <Tool $on aria-label="垂直居中"><Icon name="middle" /></Tool>
          <Tool aria-label="底端对齐"><Icon name="bottom" /></Tool>
          <Tool aria-label="减少缩进"><Icon name="outdent" /></Tool>
          <Tool aria-label="增加缩进"><Icon name="indent" /></Tool>
        </Row>
        <Row $gap={1}>
          <Tool aria-label="左对齐"><Icon name="left" /></Tool>
          <Tool $on aria-label="水平居中"><Icon name="center" /></Tool>
          <Tool aria-label="右对齐"><Icon name="right" /></Tool>
          <Tool aria-label="两端对齐"><Icon name="justify" /></Tool>
          <Tool aria-label="分散对齐"><Icon name="spread" /></Tool>
        </Row>
      </Stack>
      <Big name="merge" text="合并居中" w={62} ml={10} />
      <Big name="wrap" text="自动换行" w={56} ml={6} caret={false} />
    </Group>
    <Group $w={217} $corner>
      <Stack>
        <Row><Pick w={137} value="百分比" label="数字格式" /></Row>
        <Row $gap={1}>
          <Gap $w={4} />
          <Drop name="yen" label="货币" w={30} />
          <Tool aria-label="百分比"><Icon name="percent" /></Tool>
          <Tool aria-label="千位分隔"><Icon name="comma" /></Tool>
          <Tool aria-label="增加小数"><Icon name="decUp" /></Tool>
          <Tool aria-label="减少小数"><Icon name="decDown" /></Tool>
        </Row>
      </Stack>
      <Big name="convert" text="类型转换" w={62} ml={3} />
    </Group>
    <Group $w={176}>
      <Big name="cond" text="条件格式" w={64} />
      <Stack $ml={6}>
        <Small name="tstyle" text="表格样式" caret />
        <Small name="cstyle" text="单元格样式" caret />
      </Stack>
    </Group>
    <Group $w={188} $pad={4}>
      <Big name="sum" text="求和" w={44} />
      <Big name="filter" text="筛选" w={44} />
      <Big name="sort" text="排序" w={44} />
      <Big name="fillDown" text="填充" w={44} />
    </Group>
    <Group $w={115}>
      <Big name="cell" text="单元格" w={54} />
      <Big name="rowcol" text="行和列" w={54} ml={2} />
    </Group>
    <ScrollRibbon aria-label="向右滚动"><Icon name="chevR" /></ScrollRibbon>
  </Ribbon>
);

const Grid = () => {
  const rows = Array.from({ length: 21 }, (_, i) => i + 1);
  return (
    <SheetArea>
      <SheetClip>
        <Table>
          <thead>
            <tr>
              <Corner aria-label="全选" />
              {columns.map((c) => (
                <ColHead key={c} $on={c === "G"}>{c}</ColHead>
              ))}
            </tr>
          </thead>
          <tbody>
            {rows.map((r) => {
              const picked = r >= 2 && r <= 4;
              return (
                <tr key={r}>
                  <RowHead $on={picked}>{r < rows.length && r}</RowHead>
                  {columns.map((c, i) => (
                    <Cell key={c} $data={r <= 4 && i < 7} $num={r > 1 && (i === 0 || i > 2)} $grey={i === 6 && (r === 3 || r === 4)}>
                      {cells[r - 1] && cells[r - 1][i]}
                      {i === 6 && r === 2 && <Selection />}
                    </Cell>
                  ))}
                </tr>
              );
            })}
          </tbody>
        </Table>
      </SheetClip>
      <VScroll>
        <SplitMark />
        <ScrollArrow $dir="up" />
        <VThumb />
        <ScrollArrow $dir="down" />
      </VScroll>
    </SheetArea>
  );
};

const MiniTools = () => (
  <MiniBar>
    <Stack>
      <Row>
        <Pick w={78} value="宋体" label="浮动字体" />
        <Pick w={70} joined value="11" label="浮动字号" />
        <PlainButton $w={26} aria-label="增大字号"><Icon name="bigger" /></PlainButton>
        <PlainButton $w={28} aria-label="减小字号"><Icon name="smaller" /></PlainButton>
      </Row>
      <Row>
        <PlainButton $w={20} aria-label="换行"><Icon name="wrapS" /></PlainButton>
        <PlainButton $w={29} aria-label="加粗"><Icon name="bold" /></PlainButton>
        <Drop name="fill" label="填充颜色" w={33} />
        <Drop name="color" label="字体颜色" w={31} />
        <MiniCenter $w={32} aria-label="居中"><Icon name="center" /><Caret /></MiniCenter>
        <Gap $w={5} />
        <Drop name="borders" label="边框" w={29} />
        <PlainButton $w={24} aria-label="格式刷"><Icon name="brushS" /></PlainButton>
      </Row>
    </Stack>
    <Rule $h={46} $l={4} $r={3} />
    <Big name="merge" text="合并" w={44} />
    <Big name="sum" text="自动求和" w={64} ml={2} />
  </MiniBar>
);

const ContextMenu = () => (
  <Menu>
    {menuItems.map((m, i) =>
      m === null ? (
        <Divider key={i} />
      ) : (
        <MenuItem key={i} $short={!m.icon}>
          <button>
            <IconSlot>{m.icon && <Icon name={m.icon} />}</IconSlot>
            {m.text}
            {m.crown && <Gap $w={8} />}
            {m.crown && <Icon name="crown" />}
            <Spacer />
            {m.key && <Shortcut>{m.key}</Shortcut>}
            {m.extra && <Rule $r={9} $h={16} />}
            {m.extra && <Icon name={m.extra} />}
            {m.rule && <Rule $h={14} />}
            {m.sub && <SubArrow />}
          </button>
        </MenuItem>
      )
    )}
  </Menu>
);

const App = () => {
  const [formula, setFormula] = useState("5%");
  const [zoom, setZoom] = useState(48);

  return (
    <Page>
      <GlobalStyle />
      <Titles />
      <Menus />
      <Tools />
      <FormulaBar>
        <NameBox>
          <Field aria-label="名称框" defaultValue="G2" />
          <Caret />
        </NameBox>
        <Gap $w={44} />
        <PlainButton aria-label="缩小"><Icon name="zoomOut" /></PlainButton>
        <Fx>fx</Fx>
        <FormulaField aria-label="编辑栏" value={formula} onChange={(e) => setFormula(e.target.value)} />
      </FormulaBar>
      <Grid />
      <SheetTabs>
        {["first", "prev", "next", "last"].map((n) => (
          <PlainButton key={n} $w={26} $h={20} aria-label={n}><Icon name={n} /></PlainButton>
        ))}
        <SheetTab>Sheet1</SheetTab>
        <PlainButton $h={20} aria-label="新建工作表"><Icon name="plus" /></PlainButton>
        <Spacer />
        <Rule $h={11} $r={2} $dark />
        <Rule $h={11} $dark />
        <HScroll>
          <ScrollArrow $dir="left" />
          <HThumb />
        </HScroll>
      </SheetTabs>
      <Status>
        <PlainButton aria-label="宏"><Icon name="macro" /></PlainButton>
        <Rule $l={14} $h={14} />
        <Stats>
          <span>平均值=0.066666666667</span>
          <span>计数=3</span>
          <span>求和=0.2</span>
        </Stats>
        <Spacer />
        <PlainButton $w={24} aria-label="护眼"><Icon name="eye" /></PlainButton>
        <Drop name="cross" label="阅读模式" />
        <Rule $l={8} $r={10} $h={14} />
        <Tool $on aria-label="普通视图"><Icon name="normal" /></Tool>
        <PlainButton $w={27} aria-label="页面布局"><Icon name="page" /></PlainButton>
        <PlainButton $w={27} aria-label="分页预览"><Icon name="brk" /></PlainButton>
        <Rule $l={8} $r={10} $h={14} />
        <PlainButton>100%<Caret /></PlainButton>
        <Gap $w={12} />
        <PlainButton aria-label="缩小显示">
          <svg width="12" height="14"><path d="M1 7h10" stroke={ink} strokeWidth="2" /></svg>
        </PlainButton>
        <ZoomRange aria-label="显示比例" value={zoom} onChange={(e) => setZoom(e.target.value)} />
        <PlainButton aria-label="放大显示">
          <svg width="12" height="14"><path d="M1 7h10M6 2v10" stroke={ink} strokeWidth="2" /></svg>
        </PlainButton>
        <Gap $w={11} />
        <PlainButton aria-label="全屏"><Icon name="full" /></PlainButton>
      </Status>
      <MiniTools />
      <ContextMenu />
      <Pointer width="240" height="90" viewBox="0 0 240 90">
        <path d="M227 12L32 70" stroke="#f80d0a" strokeWidth="3" strokeLinecap="round" />
        <path d="M11 78L34 63l-1 6 4 7z" fill="#f80d0a" />
      </Pointer>
      <Activate>
        <strong>激活 Windows</strong>
        转到“设置”以激活
      </Activate>
      <Brand>
        <svg width="44" height="44" viewBox="0 0 44 44">
          <path d="M38 4C20 2 4 12 3 26c0 6 5 9 12 9C10 25 17 10 38 4z" fill="#5aa5dc" />
          <path d="M30 14c8 4 9 14 0 21-6 5-16 7-27 6 10-1 19-5 24-12 3-5 5-10 3-15z" fill="#63c982" />
          <path d="M27 15c-8-1-15 6-13 13 5 2 12-2 12-6-4 0-6 3-8 4 0-5 4-9 9-11z" fill="#4a8fd0" />
          <path d="M3 41c10 1 17-1 22-6-4 7-12 9-22 6z" fill="#e0dc52" />
        </svg>
        <div>
          极光下载站
          <small>www.xz7.com</small>
        </div>
      </Brand>
      <Bubble />
    </Page>
  );
};

export default App;
